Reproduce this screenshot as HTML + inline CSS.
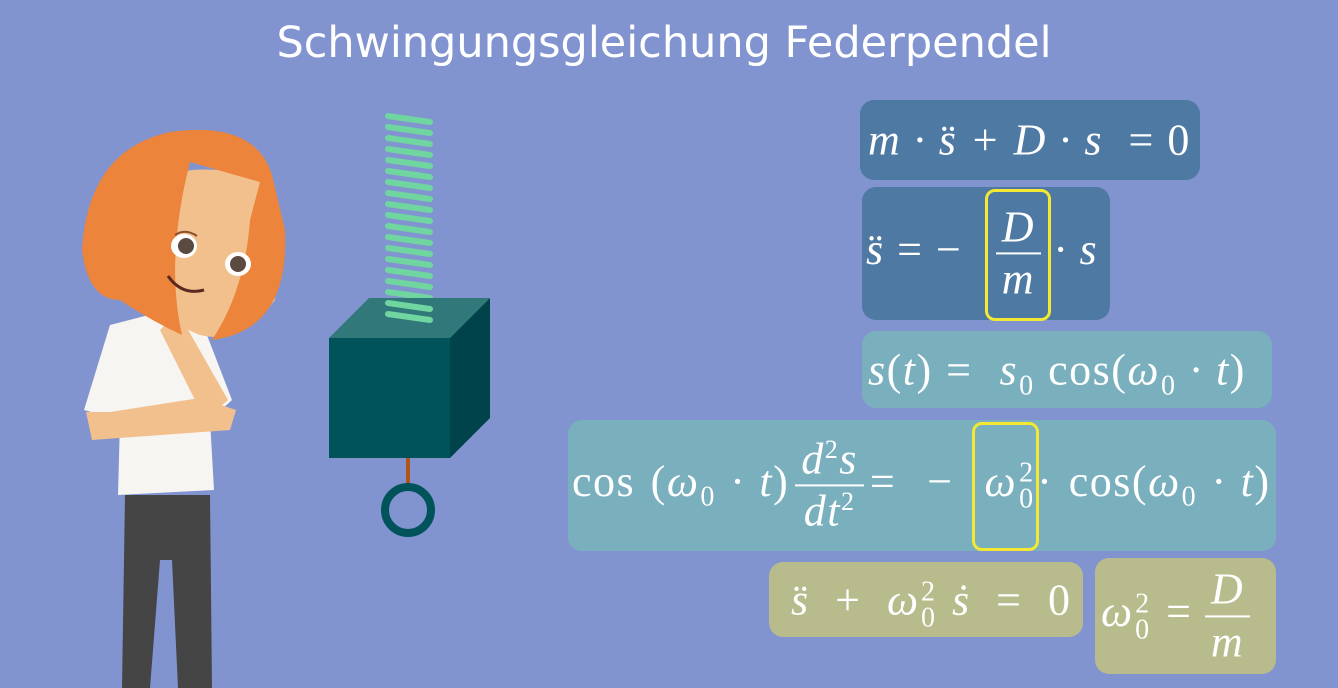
<!DOCTYPE html>
<html><head><meta charset="utf-8"><style>
body{margin:0;width:1338px;height:688px;overflow:hidden;background:#8194d0;position:relative;font-family:"Liberation Serif",serif;}
.t{position:absolute;left:276px;width:776px;top:18px;text-align:center;color:#fff;font-family:"DejaVu Sans","Liberation Sans",sans-serif;font-size:43px;white-space:nowrap}
.b{position:absolute;border-radius:14px;color:#fff;font-size:44px;white-space:nowrap;box-sizing:border-box}
.b>.in{position:absolute;left:0;top:50%;transform:translateY(-50%);font-style:italic;letter-spacing:1px;word-spacing:1px}
.y{position:absolute;border:3px solid #f5e834;border-radius:10px;box-sizing:border-box}
.up{font-style:normal}
.s{font-size:28px;font-style:normal;position:relative;top:10px;margin-left:1px}
.ss{display:inline-block;position:relative;width:20px;height:10px}
.ss i{position:absolute;left:2px;font-size:28px;font-style:normal;line-height:1}
.ss i:first-child{top:-26px}
.ss i:last-child{top:0px}
.fr{display:inline-flex;flex-direction:column;align-items:center;vertical-align:middle;line-height:1.15}
.fr>span:first-child{border-bottom:2px solid #fff;padding:0 6px}
.fr sup{font-size:26px;font-style:normal}
</style></head><body>
<div class="t">Schwingungsgleichung Federpendel</div>
<svg width="560" height="688" style="position:absolute;left:0;top:0">
<g stroke="#6fd6a0" stroke-width="6" stroke-linecap="round">
<line x1="388" y1="116" x2="430" y2="122"/><line x1="388" y1="127" x2="430" y2="133"/><line x1="388" y1="138" x2="430" y2="144"/><line x1="388" y1="149" x2="430" y2="155"/><line x1="388" y1="160" x2="430" y2="166"/><line x1="388" y1="171" x2="430" y2="177"/><line x1="388" y1="182" x2="430" y2="188"/><line x1="388" y1="193" x2="430" y2="199"/><line x1="388" y1="204" x2="430" y2="210"/><line x1="388" y1="215" x2="430" y2="221"/><line x1="388" y1="226" x2="430" y2="232"/><line x1="388" y1="237" x2="430" y2="243"/><line x1="388" y1="248" x2="430" y2="254"/><line x1="388" y1="259" x2="430" y2="265"/><line x1="388" y1="270" x2="430" y2="276"/><line x1="388" y1="281" x2="430" y2="287"/><line x1="388" y1="292" x2="430" y2="298"/>
</g>
<polygon points="329,338 450,338 490,298 369,298" fill="#31787a"/>
<g stroke="#6fd6a0" stroke-width="6" stroke-linecap="round"><line x1="388" y1="303" x2="430" y2="309"/><line x1="388" y1="314" x2="430" y2="320"/></g>
<rect x="329" y="338" width="121" height="120" fill="#00535a"/>
<polygon points="450,338 490,298 490,418 450,458" fill="#00434b"/>
<line x1="408" y1="458" x2="408" y2="488" stroke="#b0541a" stroke-width="4"/>
<circle cx="408" cy="510" r="23" fill="none" stroke="#00535a" stroke-width="8"/>
<path d="M125 495 L210 495 L212 688 L178 688 L172 560 L160 560 L150 688 L122 688 Z" fill="#454545"/>
<path d="M110 325 L160 312 L205 330 L232 400 L210 420 L214 490 L118 495 L120 420 L84 410 Z" fill="#f7f5f2"/>
<path d="M86 412 L92 440 L230 430 L236 410 L200 398 L110 412Z" fill="#f2c08c"/>
<path d="M160 330 L178 312 L228 400 L205 420 Z" fill="#f2c08c"/>
<path d="M150 180 Q200 160 262 178 L275 300 Q240 345 200 335 Q160 320 150 280Z" fill="#f2c08c"/>
<path d="M82 250 Q88 150 170 132 Q255 120 272 175 L285 230 Q290 330 212 340 Q245 290 250 220 L260 182 L190 162 Q165 260 182 335 Q150 320 120 300 Q88 300 82 250Z" fill="#ec843c"/>
<path d="M175 235 Q185 228 197 236" stroke="#8a5030" stroke-width="2" fill="none"/>
<ellipse cx="184" cy="246" rx="13" ry="12" fill="#fff"/><circle cx="186" cy="246" r="8" fill="#5a4a40"/>
<ellipse cx="238" cy="264" rx="13" ry="12" fill="#fff"/><circle cx="238" cy="264" r="8" fill="#5a4a40"/>
<path d="M168 276 Q182 296 204 290" stroke="#5a2a20" stroke-width="3" fill="none"/>
</svg>
<div class="b" style="left:860px;top:100px;width:340px;height:80px;background:#4e79a3"><span class="in" style="left:8px">m · s̈ + D · s &nbsp;<span class="up">= 0</span></span></div>
<div class="b" style="left:862px;top:187px;width:248px;height:133px;background:#4e79a3"><span class="in" style="left:4px">s̈ <span class="up">= −</span><span class="fr" style="margin:0 14px 0 34px"><span>D</span><span>m</span></span>· s</span></div>
<div class="y" style="left:985px;top:189px;width:66px;height:132px"></div>
<div class="b" style="left:862px;top:331px;width:410px;height:77px;background:#7aafbe"><span class="in" style="left:6px;letter-spacing:1.5px">s<span class="up">(</span>t<span class="up">) = </span>&nbsp;s<span class="s">0</span><span class="up"> cos(</span>ω<span class="s">0</span> · t<span class="up">)</span></span></div>
<div class="b" style="left:568px;top:420px;width:708px;height:131px;background:#7aafbe"><span class="in" style="left:4px;letter-spacing:1.5px;word-spacing:3px"><span class="up">cos (</span>ω<span class="s">0</span> · t<span class="up">)</span><span class="fr" style="margin:0 6px"><span>d<sup>2</sup>s</span><span>dt<sup>2</sup></span></span><span class="up">= &nbsp;−&nbsp;&nbsp;</span>ω<span class="ss"><i>2</i><i>0</i></span><span class="up">· cos(</span>ω<span class="s">0</span> · t<span class="up">)</span></span></div>
<div class="y" style="left:972px;top:422px;width:67px;height:129px"></div>
<div class="b" style="left:769px;top:562px;width:314px;height:75px;background:#b8bb8b"><span class="in" style="left:22px">s̈ <span class="up">&nbsp;+&nbsp;</span> ω<span class="ss"><i>2</i><i>0</i></span>&nbsp;ṡ <span class="up">&nbsp;= &nbsp;0</span></span></div>
<div class="b" style="left:1095px;top:558px;width:181px;height:116px;background:#b8bb8b"><span class="in" style="left:6px">ω<span class="ss"><i>2</i><i>0</i></span><span class="up"> = </span><span class="fr"><span>D</span><span>m</span></span></span></div>
</body></html>
